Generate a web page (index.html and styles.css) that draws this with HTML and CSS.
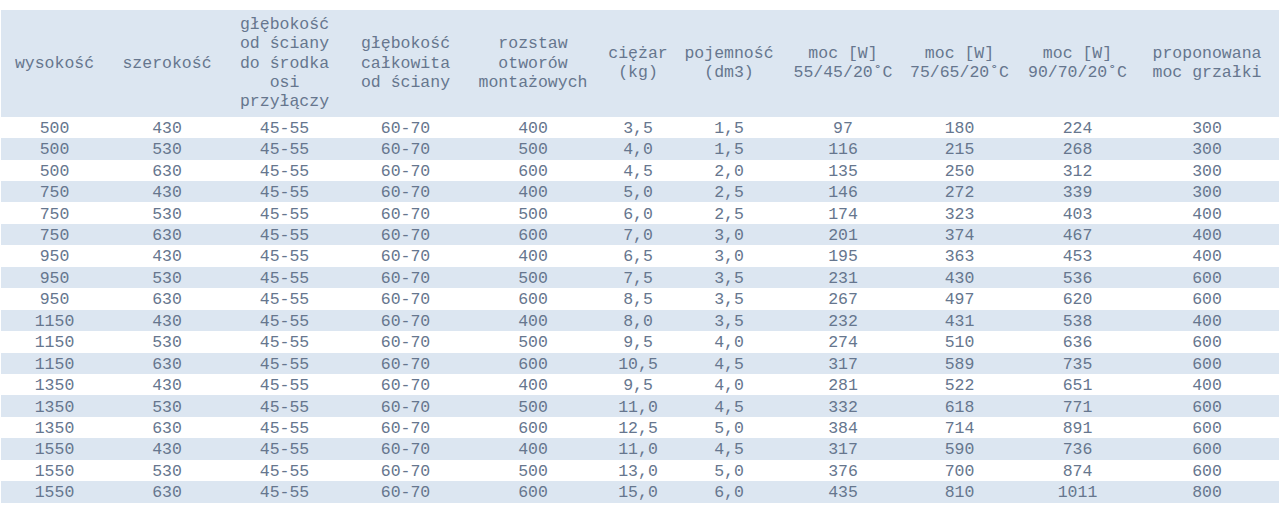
FILE: index.html
```html
<!DOCTYPE html>
<html lang="pl">
<head>
<meta charset="utf-8">
<title>Tabela grzejników</title>
<link rel="stylesheet" href="styles.css">
</head>
<body>
<table class="spec">
<colgroup>
<col class="c1"><col class="c2"><col class="c3"><col class="c4"><col class="c5"><col class="c6"><col class="c7"><col class="c8"><col class="c9"><col class="c10"><col class="c11">
</colgroup>
<thead>
<tr>
<th>wysokość</th>
<th>szerokość</th>
<th>głębokość<br>od ściany<br>do środka<br>osi<br>przyłączy</th>
<th>głębokość<br>całkowita<br>od ściany</th>
<th>rozstaw<br>otworów<br>montażowych</th>
<th>ciężar<br>(kg)</th>
<th>pojemność<br>(dm3)</th>
<th>moc [W]<br>55/45/20˚C</th>
<th>moc [W]<br>75/65/20˚C</th>
<th>moc [W]<br>90/70/20˚C</th>
<th class="last">proponowana<br>moc grzałki</th>
</tr>
</thead>
<tbody>
<tr><td>500</td><td>430</td><td>45-55</td><td>60-70</td><td>400</td><td>3,5</td><td>1,5</td><td>97</td><td>180</td><td>224</td><td class="last">300</td></tr>
<tr class="alt"><td>500</td><td>530</td><td>45-55</td><td>60-70</td><td>500</td><td>4,0</td><td>1,5</td><td>116</td><td>215</td><td>268</td><td class="last">300</td></tr>
<tr><td>500</td><td>630</td><td>45-55</td><td>60-70</td><td>600</td><td>4,5</td><td>2,0</td><td>135</td><td>250</td><td>312</td><td class="last">300</td></tr>
<tr class="alt"><td>750</td><td>430</td><td>45-55</td><td>60-70</td><td>400</td><td>5,0</td><td>2,5</td><td>146</td><td>272</td><td>339</td><td class="last">300</td></tr>
<tr><td>750</td><td>530</td><td>45-55</td><td>60-70</td><td>500</td><td>6,0</td><td>2,5</td><td>174</td><td>323</td><td>403</td><td class="last">400</td></tr>
<tr class="alt"><td>750</td><td>630</td><td>45-55</td><td>60-70</td><td>600</td><td>7,0</td><td>3,0</td><td>201</td><td>374</td><td>467</td><td class="last">400</td></tr>
<tr><td>950</td><td>430</td><td>45-55</td><td>60-70</td><td>400</td><td>6,5</td><td>3,0</td><td>195</td><td>363</td><td>453</td><td class="last">400</td></tr>
<tr class="alt"><td>950</td><td>530</td><td>45-55</td><td>60-70</td><td>500</td><td>7,5</td><td>3,5</td><td>231</td><td>430</td><td>536</td><td class="last">600</td></tr>
<tr><td>950</td><td>630</td><td>45-55</td><td>60-70</td><td>600</td><td>8,5</td><td>3,5</td><td>267</td><td>497</td><td>620</td><td class="last">600</td></tr>
<tr class="alt"><td>1150</td><td>430</td><td>45-55</td><td>60-70</td><td>400</td><td>8,0</td><td>3,5</td><td>232</td><td>431</td><td>538</td><td class="last">400</td></tr>
<tr><td>1150</td><td>530</td><td>45-55</td><td>60-70</td><td>500</td><td>9,5</td><td>4,0</td><td>274</td><td>510</td><td>636</td><td class="last">600</td></tr>
<tr class="alt"><td>1150</td><td>630</td><td>45-55</td><td>60-70</td><td>600</td><td>10,5</td><td>4,5</td><td>317</td><td>589</td><td>735</td><td class="last">600</td></tr>
<tr><td>1350</td><td>430</td><td>45-55</td><td>60-70</td><td>400</td><td>9,5</td><td>4,0</td><td>281</td><td>522</td><td>651</td><td class="last">400</td></tr>
<tr class="alt"><td>1350</td><td>530</td><td>45-55</td><td>60-70</td><td>500</td><td>11,0</td><td>4,5</td><td>332</td><td>618</td><td>771</td><td class="last">600</td></tr>
<tr><td>1350</td><td>630</td><td>45-55</td><td>60-70</td><td>600</td><td>12,5</td><td>5,0</td><td>384</td><td>714</td><td>891</td><td class="last">600</td></tr>
<tr class="alt"><td>1550</td><td>430</td><td>45-55</td><td>60-70</td><td>400</td><td>11,0</td><td>4,5</td><td>317</td><td>590</td><td>736</td><td class="last">600</td></tr>
<tr><td>1550</td><td>530</td><td>45-55</td><td>60-70</td><td>500</td><td>13,0</td><td>5,0</td><td>376</td><td>700</td><td>874</td><td class="last">600</td></tr>
<tr class="alt"><td>1550</td><td>630</td><td>45-55</td><td>60-70</td><td>600</td><td>15,0</td><td>6,0</td><td>435</td><td>810</td><td>1011</td><td class="last">800</td></tr>
</tbody>
</table>
</body>
</html>
```

FILE: styles.css
```css
html, body {
  margin: 0;
  padding: 0;
  background: #ffffff;
}

body {
  padding: 10px 0 0 1px;
  font-family: "Liberation Mono", "Courier New", monospace;
  font-size: 16.5px;
  color: #66768e;
}

.spec {
  width: 1278px;
  table-layout: fixed;
  border-collapse: collapse;
  border-spacing: 0;
}

.c1 { width: 107px; }
.c2 { width: 118px; }
.c3 { width: 117px; }
.c4 { width: 125px; }
.c5 { width: 130px; }
.c6 { width: 80px; }
.c7 { width: 102px; }
.c8 { width: 126px; }
.c9 { width: 107px; }
.c10 { width: 129px; }
.c11 { width: 137px; }

.spec th,
.spec td {
  padding: 0;
  text-align: center;
  white-space: nowrap;
  line-height: 19.3px;
}

.spec th {
  font-weight: normal;
  height: 106.7px;
  vertical-align: middle;
  background: #dce6f1;
}

.spec td {
  height: 21.44px;
  vertical-align: bottom;
}

.spec .last {
  padding-right: 7px;
}

.spec tr.alt td {
  background: #dce6f1;
}
```
